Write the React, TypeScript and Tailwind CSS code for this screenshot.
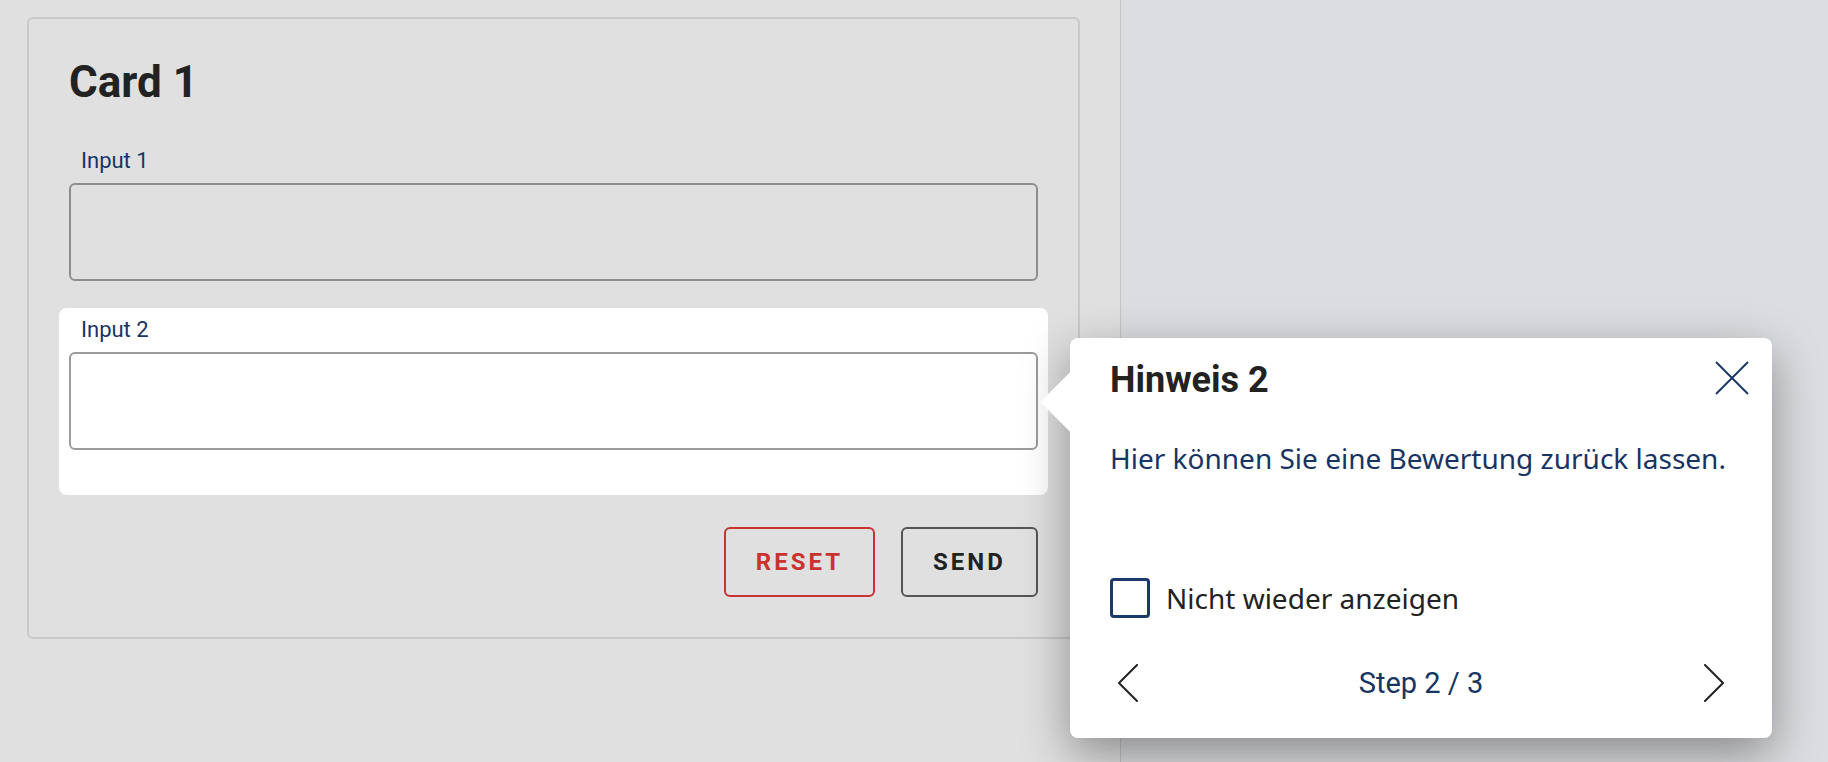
import React from "react";

const NAVY = "text-[#173463]";

function Field({ label, highlighted }: { label: string; highlighted?: boolean }) {
  return (
    <div className={highlighted ? "relative -m-[10px] rounded-[8px] bg-white p-[10px]" : ""}>
      <label className={`block h-[24px] pl-[12px] font-['Roboto'] text-[22px] leading-[24px] ${NAVY}`}>{label}</label>
      <div
        className={`mt-[10px] h-[98px] rounded-[6px] border-2 ${
          highlighted ? "border-[#9b9b9b] bg-white" : "border-[#8d8d8d] bg-transparent"
        }`}
      />
      <div className="h-[35px]" />
    </div>
  );
}

function Chevron({ dir }: { dir: "left" | "right" }) {
  return (
    <svg width="22" height="38" viewBox="0 0 22 38" fill="none">
      <polyline
        points={dir === "left" ? "20,1 2,19 20,37" : "2,1 20,19 2,37"}
        stroke="#222222"
        strokeWidth="2"
        strokeLinecap="round"
        strokeLinejoin="round"
      />
    </svg>
  );
}

function Popover() {
  return (
    <div className="absolute left-[1070px] top-[338px] h-[400px] w-[702px] rounded-[8px] bg-white shadow-[0_16px_48px_rgba(0,0,0,0.38)]">
      <div className="absolute left-[-21px] top-[43px] h-[42px] w-[42px] rotate-45 bg-white" />
      <div className="relative flex h-full flex-col pl-[40px] pr-[23px]">
        <div className="flex items-start justify-between pt-[20px]">
          <h3 className="font-['Roboto'] text-[36px] font-bold leading-[44px] text-[#222222]">Hinweis 2</h3>
          <button className="mt-[3px]" aria-label="close">
            <svg width="34" height="34" viewBox="0 0 34 34" fill="none">
              <line x1="1" y1="1" x2="33" y2="33" stroke="#1b3666" strokeWidth="2" />
              <line x1="33" y1="1" x2="1" y2="33" stroke="#1b3666" strokeWidth="2" />
            </svg>
          </button>
        </div>
        <p className={`mt-[40px] font-['Noto_Sans'] text-[28px] leading-[32px] ${NAVY}`}>
          Hier können Sie eine Bewertung zurück lassen.
        </p>
        <label className="mt-[104px] flex items-center gap-[16px]">
          <span className="h-[40px] w-[40px] rounded-[4px] border-[3px] border-[#1b3a6b]" />
          <span className="font-['Noto_Sans'] text-[28px] leading-[34px] text-[#222222]">Nicht wieder anzeigen</span>
        </label>
        <div className="ml-[7px] mr-[24px] mt-[40px] flex h-[50px] items-center justify-between">
          <Chevron dir="left" />
          <span className={`font-['Roboto'] text-[29px] leading-[34px] ${NAVY}`}>Step 2 / 3</span>
          <Chevron dir="right" />
        </div>
      </div>
    </div>
  );
}

export default function App() {
  return (
    <div className="relative flex h-[762px] w-[1828px] overflow-hidden bg-[#dcdde0] font-['Roboto',sans-serif]">
      <div className="h-full w-[1121px] shrink-0 border-r border-[#c4c4c4] bg-[#e0e0e0] pl-[27px] pt-[17px]">
        <div className="w-[1053px] rounded-[6px] border-2 border-[#c9c9c9] px-[40px] pb-[40px] pt-[37px]">
          <h2 className="font-['Roboto'] text-[44px] font-bold leading-[52px] text-[#222222]">Card 1</h2>
          <div className="mt-[41px] flex flex-col gap-[2px]">
            <Field label="Input 1" />
            <Field label="Input 2" highlighted />
          </div>
          <div className="mt-[42px] flex justify-end gap-[26px]">
            <button className="h-[70px] w-[151px] rounded-[6px] border-2 border-[#c8322f] font-['Roboto'] text-[24px] font-bold tracking-[3px] text-[#c8322f]">
              RESET
            </button>
            <button className="h-[70px] w-[137px] rounded-[6px] border-2 border-[#555555] font-['Roboto'] text-[24px] font-bold tracking-[3px] text-[#222222]">
              SEND
            </button>
          </div>
        </div>
      </div>
      <div className="flex-1" />
      <Popover />
    </div>
  );
}
